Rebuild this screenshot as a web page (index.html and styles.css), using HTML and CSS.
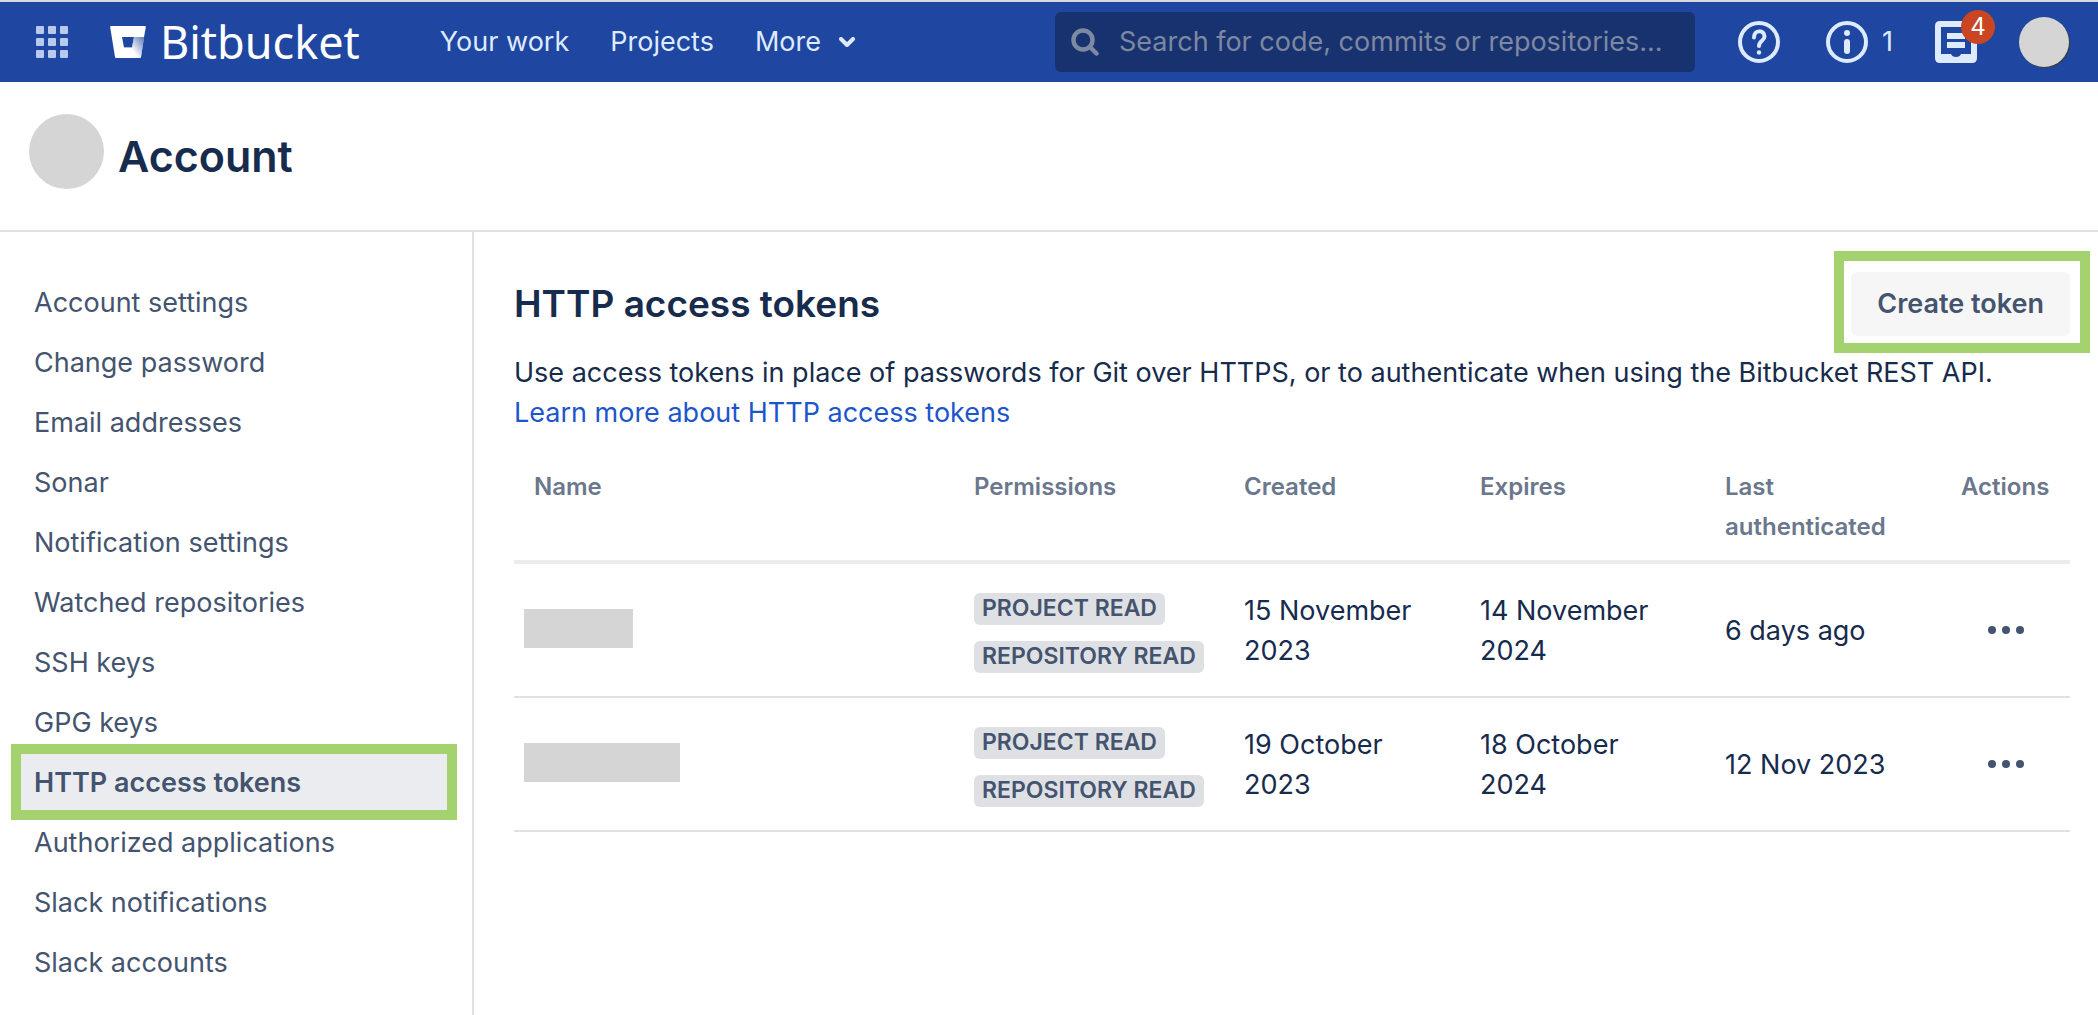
FILE: index.html
```html
<!DOCTYPE html>
<html lang="en">
<head>
    <meta charset="UTF-8">
    <meta name="viewport" content="width=device-width, initial-scale=1.0">
    <title>HTTP access tokens - Bitbucket</title>
    <link rel="stylesheet" href="styles.css">
</head>
<body>
    <header class="topbar">
        <button class="icon-button apps" type="button" aria-label="Switch apps">
            <svg width="32" height="32" viewBox="0 0 32 32" fill="#b9caec">
                <rect x="0" y="0" width="8" height="8" rx="1"/>
                <rect x="12" y="0" width="8" height="8" rx="1"/>
                <rect x="24" y="0" width="8" height="8" rx="1"/>
                <rect x="0" y="12" width="8" height="8" rx="1"/>
                <rect x="12" y="12" width="8" height="8" rx="1"/>
                <rect x="24" y="12" width="8" height="8" rx="1"/>
                <rect x="0" y="24" width="8" height="8" rx="1"/>
                <rect x="12" y="24" width="8" height="8" rx="1"/>
                <rect x="24" y="24" width="8" height="8" rx="1"/>
            </svg>
        </button>
        <a class="logo" href="#">
            <svg width="36" height="32" viewBox="0 0 36 32">
                <defs>
                    <linearGradient id="bucket-shade" x1="35" y1="12" x2="21" y2="23" gradientUnits="userSpaceOnUse">
                        <stop offset="0.1" stop-color="#fff" stop-opacity="0.35"/>
                        <stop offset="1" stop-color="#fff"/>
                    </linearGradient>
                </defs>
                <path d="M1 0H35Q36 0 35.800 1.200L34 11H12L14 21.500H22L24 11H34L31 31Q30.800 32 30 32H6Q5.200 32 5 31L0.200 1.200Q0 0 1 0Z" fill="#fff" fill-rule="evenodd"/>
                <path d="M24 11H34.200L31 31Q30.800 32 30 32L14 21.500H22Z" fill="#1f46a0"/>
                <path d="M24 11H34.200L31 31Q30.800 32 30 32H6L14 21.500H22Z" fill="url(#bucket-shade)"/>
            </svg>
            <span class="logo-text">Bitbucket</span>
        </a>
        <nav class="main-nav">
            <a href="#">Your work</a>
            <a href="#">Projects</a>
            <a class="more" href="#">More
                <svg width="16" height="10" viewBox="0 0 16 10" fill="none" stroke="#deebff" stroke-width="4" stroke-linecap="round" stroke-linejoin="round">
                    <path d="M2 2l6 6 6-6"/>
                </svg>
            </a>
        </nav>
        <label class="search">
            <svg width="28" height="28" viewBox="0 0 28 28" fill="none" stroke="#7d88a1" stroke-linecap="round">
                <circle cx="12" cy="12" r="9.500" stroke-width="4.500"/>
                <path d="M19.500 19.500l6 6" stroke-width="4.500"/>
            </svg>
            <input class="search-input" type="text" aria-label="Search" placeholder="Search for code, commits or repositories...">
        </label>
        <div class="actions">
            <button class="icon-button" type="button" aria-label="Help">
                <svg width="42" height="42" viewBox="0 0 42 42" fill="none" stroke="#deebff" stroke-width="4" stroke-linecap="round" stroke-linejoin="round">
                    <circle cx="21" cy="21" r="19"/>
                    <path d="M16 16.500C16 8.500 26.500 8.500 26.500 15.500C26.500 20 21 19.500 21 25"/>
                    <circle cx="21" cy="31.500" r="2.200" fill="#deebff" stroke="none"/>
                </svg>
            </button>
            <button class="icon-button alerts" type="button" aria-label="Alerts">
                <svg width="42" height="42" viewBox="0 0 42 42">
                    <circle cx="21" cy="21" r="19" fill="none" stroke="#deebff" stroke-width="4"/>
                    <circle cx="21" cy="12" r="3" fill="#deebff"/>
                    <rect x="18" y="18" width="6" height="15" rx="3" fill="#deebff"/>
                </svg>
                <span>1</span>
            </button>
            <button class="icon-button inbox" type="button" aria-label="Your inbox">
                <svg width="42" height="42" viewBox="0 0 42 42">
                    <path d="M5 0H37Q42 0 42 5V37Q42 42 37 42H5Q0 42 0 37V5Q0 0 5 0ZM6 6V33H16Q17 36 21 36T26 33H36V6Z" fill="#deebff" fill-rule="evenodd"/>
                    <rect x="12" y="12" width="18" height="6" fill="#deebff"/>
                    <rect x="12" y="21" width="18" height="6" fill="#deebff"/>
                </svg>
                <span class="badge">4</span>
            </button>
            <button class="avatar-small" type="button" aria-label="Profile"></button>
        </div>
    </header>

    <div class="page-header">
        <div class="avatar-large"></div>
        <h1>Account</h1>
    </div>

    <div class="page-panel">
        <nav class="sidebar">
            <a href="#">Account settings</a>
            <a href="#">Change password</a>
            <a href="#">Email addresses</a>
            <a href="#">Sonar</a>
            <a href="#">Notification settings</a>
            <a href="#">Watched repositories</a>
            <a href="#">SSH keys</a>
            <a href="#">GPG keys</a>
            <a class="selected" href="#">HTTP access tokens</a>
            <a href="#">Authorized applications</a>
            <a href="#">Slack notifications</a>
            <a href="#">Slack accounts</a>
        </nav>

        <main class="content">
            <div class="content-header">
                <h2>HTTP access tokens</h2>
                <button class="create-button" type="button">Create token</button>
            </div>
            <p class="description">
                Use access tokens in place of passwords for Git over HTTPS, or to authenticate when using the Bitbucket REST API.<br>
                <a href="#">Learn more about HTTP access tokens</a>
            </p>

            <table class="tokens">
                <thead>
                    <tr>
                        <th class="col-name">Name</th>
                        <th class="col-permissions">Permissions</th>
                        <th class="col-created">Created</th>
                        <th class="col-expires">Expires</th>
                        <th class="col-last">Last authenticated</th>
                        <th class="col-actions">Actions</th>
                    </tr>
                </thead>
                <tbody>
                    <tr>
                        <td class="name"><div class="redacted"></div></td>
                        <td>
                            <div class="tags">
                                <span class="tag">PROJECT READ</span>
                                <span class="tag">REPOSITORY READ</span>
                            </div>
                        </td>
                        <td>15 November 2023</td>
                        <td>14 November 2024</td>
                        <td>6 days ago</td>
                        <td class="row-actions">
                            <button class="icon-button" type="button" aria-label="Token actions">
                                <svg width="36" height="8" viewBox="0 0 36 8" fill="#44546f">
                                    <circle cx="4" cy="4" r="4"/>
                                    <circle cx="18" cy="4" r="4"/>
                                    <circle cx="32" cy="4" r="4"/>
                                </svg>
                            </button>
                        </td>
                    </tr>
                    <tr>
                        <td class="name"><div class="redacted redacted-long"></div></td>
                        <td>
                            <div class="tags">
                                <span class="tag">PROJECT READ</span>
                                <span class="tag">REPOSITORY READ</span>
                            </div>
                        </td>
                        <td>19 October 2023</td>
                        <td>18 October 2024</td>
                        <td>12 Nov 2023</td>
                        <td class="row-actions">
                            <button class="icon-button" type="button" aria-label="Token actions">
                                <svg width="36" height="8" viewBox="0 0 36 8" fill="#44546f">
                                    <circle cx="4" cy="4" r="4"/>
                                    <circle cx="18" cy="4" r="4"/>
                                    <circle cx="32" cy="4" r="4"/>
                                </svg>
                            </button>
                        </td>
                    </tr>
                </tbody>
            </table>
        </main>
    </div>
</body>
</html>
```

FILE: styles.css
```css
* {
    box-sizing: border-box;
}
body {
    display: flex;
    flex-direction: column;
    min-height: 100vh;
    margin: 0;
    background-color: #fff;
    color: #172b4d;
    font-family: Inter, "Liberation Sans", sans-serif;
    font-size: 27px;
    line-height: 40px;
}
a {
    color: #1d55cc;
    text-decoration: none;
}
svg {
    display: block;
}
.icon-button {
    display: flex;
    align-items: center;
    padding: 0;
    border: 0;
    background: none;
    color: #deebff;
    font: inherit;
}

/* top bar */
.topbar {
    display: flex;
    align-items: center;
    height: 82px;
    padding: 0 29px 0 36px;
    border-top: 2px solid #d8d9dd;
    background-color: #1f46a0;
}
.logo {
    display: flex;
    align-items: center;
    gap: 14px;
    margin-left: 42px;
    color: #fff;
}
.logo-text {
    font-family: "Noto Sans", sans-serif;
    font-size: 45px;
}
.main-nav {
    display: flex;
    gap: 41px;
    margin-left: 80px;
}
.main-nav a {
    color: #deebff;
}
.more {
    display: flex;
    align-items: center;
    gap: 18px;
}
.search {
    display: flex;
    align-items: center;
    gap: 20px;
    width: 640px;
    height: 60px;
    margin-left: auto;
    padding: 0 16px;
    border-radius: 6px;
    background-color: #183270;
}
.search-input {
    flex: 1;
    min-width: 0;
    padding: 0;
    border: 0;
    outline: 0;
    background: none;
    color: #fff;
    font: inherit;
}
.search-input::placeholder {
    color: #7d88a1;
    opacity: 1;
}
.actions {
    display: flex;
    align-items: center;
    gap: 42px;
    margin-left: 43px;
}
.alerts {
    gap: 14px;
    margin-left: 4px;
}
.inbox {
    position: relative;
}
.badge {
    position: absolute;
    top: -11px;
    right: -18px;
    width: 34px;
    height: 34px;
    border-radius: 50%;
    background-color: #ca4521;
    color: #fff;
    font-size: 24px;
    line-height: 34px;
    text-align: center;
}
.avatar-small {
    width: 50px;
    height: 50px;
    padding: 0;
    border: 0;
    border-radius: 50%;
    background-color: #d5d5d5;
    box-shadow: 1px 1px 0 #3c3c3c;
}

/* page header */
.page-header {
    display: flex;
    align-items: center;
    gap: 14px;
    height: 150px;
    padding: 0 29px;
    border-bottom: 2px solid #dfe1e6;
}
.avatar-large {
    width: 75px;
    height: 75px;
    margin-bottom: 10px;
    border-radius: 50%;
    background-color: #d5d5d5;
}
h1,
h2 {
    margin: 0;
    font-weight: 600;
}
h1 {
    font-size: 43px;
}

/* sidebar */
.page-panel {
    display: flex;
    flex: 1;
}
.sidebar {
    flex: none;
    width: 474px;
    padding: 40px 22px 40px 18px;
    border-right: 2px solid #dfe1e6;
}
.sidebar a {
    display: block;
    padding: 11px 16px 9px;
    color: #44546f;
}
.sidebar .selected {
    position: relative;
    background-color: #ebecf0;
    font-weight: 600;
}
.selected::after,
.create-button::after {
    content: "";
    position: absolute;
    border: 10px solid #a3d26e;
}
.selected::after {
    inset: -8px -7px;
}

/* content */
.content {
    flex: 1;
    min-width: 0;
    padding: 40px 28px 40px 40px;
}
.content-header {
    display: flex;
    align-items: center;
    justify-content: space-between;
}
h2 {
    font-size: 37px;
}
.create-button {
    position: relative;
    height: 64px;
    padding: 0 26px;
    border: 0;
    border-radius: 6px;
    background-color: #f6f6f6;
    color: #44546f;
    font: inherit;
    font-weight: 600;
}
.create-button::after {
    inset: -21px -20px -17px -17px;
}
.description {
    margin: 17px 0 19px;
}
.tokens {
    width: 100%;
    border-collapse: separate;
    border-spacing: 0;
    table-layout: fixed;
}
.tokens th {
    padding: 15px 20px 13px;
    border-bottom: 4px solid #ebecf0;
    color: #6b778c;
    font-size: 24px;
    font-weight: 600;
    text-align: left;
    vertical-align: top;
}
.tokens td {
    height: 134px;
    padding: 2px 20px 0;
    border-bottom: 2px solid #dfe1e6;
}
.col-permissions {
    width: 270px;
}
.col-created,
.col-last {
    width: 236px;
}
.col-expires {
    width: 245px;
}
.col-actions {
    width: 129px;
}
.tokens .name {
    padding: 0 10px 4px;
}
.redacted {
    width: 109px;
    height: 39px;
    background-color: #d5d5d5;
}
.redacted-long {
    width: 156px;
}
.tags {
    display: flex;
    flex-direction: column;
    align-items: flex-start;
    gap: 16px;
    padding-top: 4px;
}
.tag {
    padding: 0 8px 2px;
    border-radius: 6px;
    background-color: #dfe0e4;
    color: #44546f;
    font-size: 23px;
    font-weight: 600;
    line-height: 30px;
    white-space: nowrap;
}
.row-actions .icon-button {
    margin: 0 auto;
    padding: 15px 0 17px;
}
```
